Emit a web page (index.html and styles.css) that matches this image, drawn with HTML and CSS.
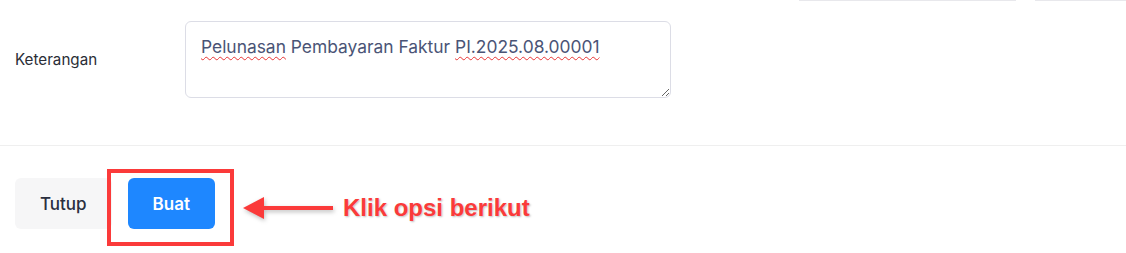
FILE: index.html
```html
<!DOCTYPE html>
<html lang="en">
<head>
  <meta charset="UTF-8">
  <meta name="viewport" content="width=device-width, initial-scale=1.0">
  <title>Buat Pelunasan</title>
  <link rel="stylesheet" href="styles.css">
</head>
<body>
  <div class="cut-row">
    <span class="cut-field"></span>
    <span class="cut-field wide"></span>
  </div>

  <div class="form-row">
    <label class="form-label">Keterangan</label>
    <div class="textarea"><span class="typo">Pelunasan</span> Pembayaran Faktur <span class="typo">PI.2025.08.00001</span></div>
  </div>

  <div class="footer">
    <button class="btn btn-light">Tutup</button>
    <button class="btn btn-primary">Buat</button>

    <!-- annotation -->
    <div class="highlight"></div>
    <div class="callout">
      <svg class="arrow" width="92" height="28" viewBox="0 0 92 28">
        <polygon points="0,14 21,3 21,25" fill="#fb3a3a"/>
        <rect x="19" y="12" width="71" height="4" fill="#fb3a3a"/>
      </svg>
      <span class="callout-text">Klik opsi berikut</span>
    </div>
  </div>
</body>
</html>
```

FILE: styles.css
```css
body {
  margin: 0;
  background-color: #fff;
  font-family: Inter, "Noto Sans", sans-serif;
  color: #2a2f3f;
}

.cut-row {
  display: flex;
  gap: 19px;
  padding-left: 799px;
  height: 1px;
}

.cut-field {
  width: 217px;
  border-bottom: 1px solid #e8e8ec;
}

.cut-field.wide {
  flex: 1;
}

.form-row {
  display: flex;
  align-items: center;
  margin-top: 20px;
  padding: 0 15px;
}

.form-label {
  width: 170px;
  font-size: 15.2px;
  color: #2a2d36;
}

.textarea {
  box-sizing: border-box;
  width: 486px;
  height: 77px;
  padding: 12px 15px;
  border: 1px solid #dcdde6;
  border-radius: 6px;
  font-size: 17.4px;
  line-height: 26px;
  color: #4a5476;
  resize: both;
  overflow: auto;
}

.typo {
  text-decoration: underline wavy #e83535;
  text-decoration-thickness: 1px;
  text-underline-offset: 3px;
}

.footer {
  position: relative;
  display: flex;
  gap: 16px;
  margin-top: 47px;
  padding: 32px 15px 24px;
  border-top: 1px solid #efefef;
  background-color: #fff;
}

.btn {
  height: 51px;
  padding: 0 25px;
  border: none;
  border-radius: 6px;
  font-family: Inter, "Noto Sans", sans-serif;
  font-size: 17px;
  font-weight: 500;
}

.btn-light {
  background-color: #f6f6f7;
  color: #2a2f3f;
}

.btn-primary {
  background-color: #1e87ff;
  color: #fff;
  font-weight: 600;
}

.highlight {
  position: absolute;
  left: 107px;
  top: 23px;
  box-sizing: border-box;
  width: 127px;
  height: 77px;
  border: 4px solid #fb3a3a;
}

.callout {
  position: absolute;
  left: 243px;
  top: 48px;
  display: flex;
  align-items: center;
  gap: 8px;
}

.arrow {
  display: block;
  filter: drop-shadow(1px 2px 2px rgba(0, 0, 0, 0.25));
}

.callout-text {
  font-family: "Liberation Sans", Arial, sans-serif;
  font-size: 24px;
  line-height: 28px;
  font-weight: bold;
  color: #fb3a3a;
  text-shadow: 1px 1px 2px rgba(0, 0, 0, 0.25);
}
```
